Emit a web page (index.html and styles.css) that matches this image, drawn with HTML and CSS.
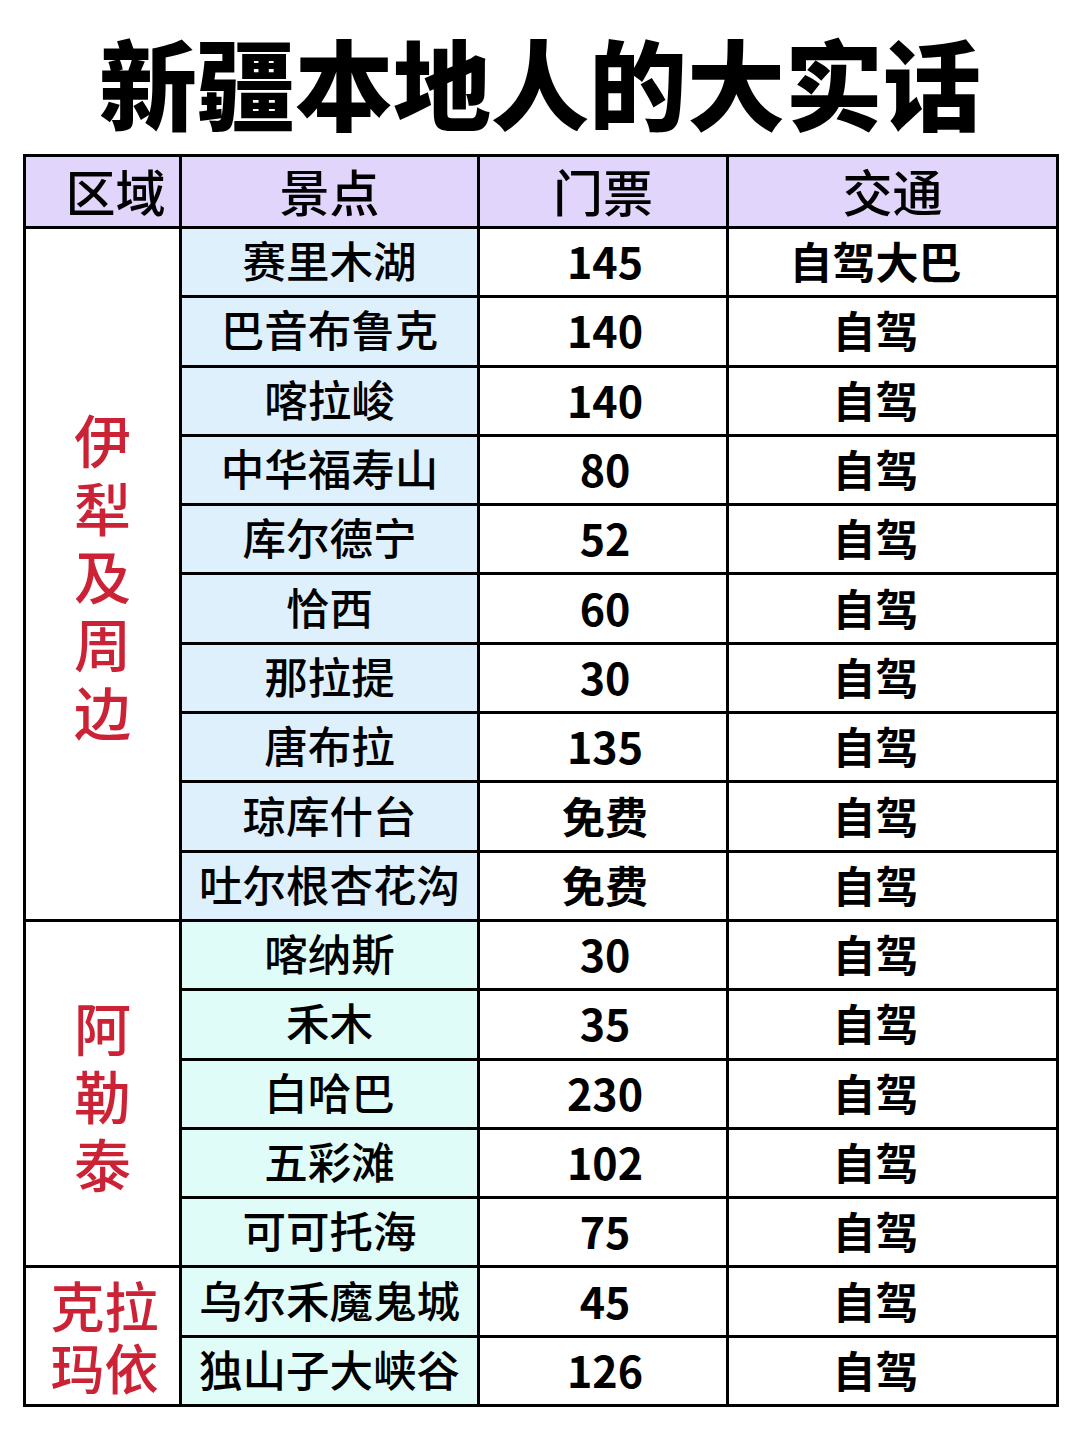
FILE: index.html
```html
<!DOCTYPE html>
<html lang="zh-CN">
<head>
<meta charset="utf-8">
<title>新疆本地人的大实话</title>
<link rel="stylesheet" href="styles.css">
</head>
<body>
<div class="page">
  <h1 class="title">新疆本地人的大实话</h1>
  <table class="grid">
    <colgroup>
      <col class="c-region">
      <col class="c-spot">
      <col class="c-ticket">
      <col class="c-traffic">
    </colgroup>
    <thead>
      <tr class="head">
        <th class="h-region">区域</th>
        <th>景点</th>
        <th>门票</th>
        <th>交通</th>
      </tr>
    </thead>
    <tbody>
      <tr><td class="region" rowspan="10"><div class="vlabel">伊犁及周边</div></td><td class="spot blue">赛里木湖</td><td class="num">145</td><td class="traffic">自驾大巴</td></tr>
      <tr><td class="spot blue">巴音布鲁克</td><td class="num">140</td><td class="traffic">自驾</td></tr>
      <tr><td class="spot blue">喀拉峻</td><td class="num">140</td><td class="traffic">自驾</td></tr>
      <tr><td class="spot blue">中华福寿山</td><td class="num">80</td><td class="traffic">自驾</td></tr>
      <tr><td class="spot blue">库尔德宁</td><td class="num">52</td><td class="traffic">自驾</td></tr>
      <tr><td class="spot blue">恰西</td><td class="num">60</td><td class="traffic">自驾</td></tr>
      <tr><td class="spot blue">那拉提</td><td class="num">30</td><td class="traffic">自驾</td></tr>
      <tr><td class="spot blue">唐布拉</td><td class="num">135</td><td class="traffic">自驾</td></tr>
      <tr><td class="spot blue">琼库什台</td><td class="num">免费</td><td class="traffic">自驾</td></tr>
      <tr><td class="spot blue">吐尔根杏花沟</td><td class="num">免费</td><td class="traffic">自驾</td></tr>
      <tr><td class="region" rowspan="5"><div class="vlabel">阿勒泰</div></td><td class="spot cyan">喀纳斯</td><td class="num">30</td><td class="traffic">自驾</td></tr>
      <tr><td class="spot cyan">禾木</td><td class="num">35</td><td class="traffic">自驾</td></tr>
      <tr><td class="spot cyan">白哈巴</td><td class="num">230</td><td class="traffic">自驾</td></tr>
      <tr><td class="spot cyan">五彩滩</td><td class="num">102</td><td class="traffic">自驾</td></tr>
      <tr><td class="spot cyan">可可托海</td><td class="num">75</td><td class="traffic">自驾</td></tr>
      <tr><td class="region" rowspan="2"><div class="blabel">克拉玛依</div></td><td class="spot cyan">乌尔禾魔鬼城</td><td class="num">45</td><td class="traffic">自驾</td></tr>
      <tr><td class="spot cyan">独山子大峡谷</td><td class="num">126</td><td class="traffic">自驾</td></tr>
    </tbody>
  </table>
</div>
</body>
</html>
```

FILE: styles.css
```css
html, body {
  margin: 0;
  padding: 0;
  background: #ffffff;
}

body {
  font-family: "Noto Sans CJK SC", "Noto Sans", sans-serif;
  color: #000000;
}

.page {
  width: 1080px;
  height: 1440px;
  padding: 0 0 0 23px;
  box-sizing: border-box;
}

.title {
  margin: 0;
  padding: 25px 0 0 0;
  height: 154px;
  box-sizing: border-box;
  width: 1034px;
  text-align: center;
  font-size: 98px;
  line-height: 110px;
  font-weight: 900;
  letter-spacing: 0;
}

.grid {
  border-collapse: collapse;
  table-layout: fixed;
  width: 1033px;
}

.c-region { width: 156px; }
.c-spot { width: 298px; }
.c-ticket { width: 249px; }
.c-traffic { width: 330px; }

.grid th,
.grid td {
  border: 3px solid #000;
  padding: 0;
  text-align: center;
  vertical-align: middle;
  overflow: visible;
  white-space: nowrap;
}

.grid thead th {
  background: #e1d5fb;
  height: 65px;
  padding-bottom: 4px;
  font-size: 50px;
  font-weight: 500;
  line-height: 60px;
}

.grid thead th.h-region {
  padding-left: 26px;
}

.grid tbody td {
  height: 62.3px;
  padding-bottom: 4px;
}

.spot {
  font-size: 43.5px;
  font-weight: 500;
  line-height: 50px;
}

.blue { background: #dff0fd; }
.cyan { background: #e0fcf9; }

.grid td.num {
  font-size: 43px;
  font-weight: 700;
  line-height: 50px;
  padding-left: 4px;
}

.grid td.traffic {
  font-size: 43px;
  font-weight: 700;
  line-height: 50px;
  padding-right: 34px;
}

.grid td.region {
  background: #ffffff;
  color: #cc2236;
  white-space: normal;
  padding-bottom: 0;
}

.vlabel {
  width: 1em;
  margin: 0 auto;
  font-size: 57px;
  line-height: 68px;
  font-weight: 500;
}

.blabel {
  width: 2em;
  margin: 0 auto;
  padding-left: 4px;
  font-size: 54px;
  line-height: 62px;
  font-weight: 500;
}
```
